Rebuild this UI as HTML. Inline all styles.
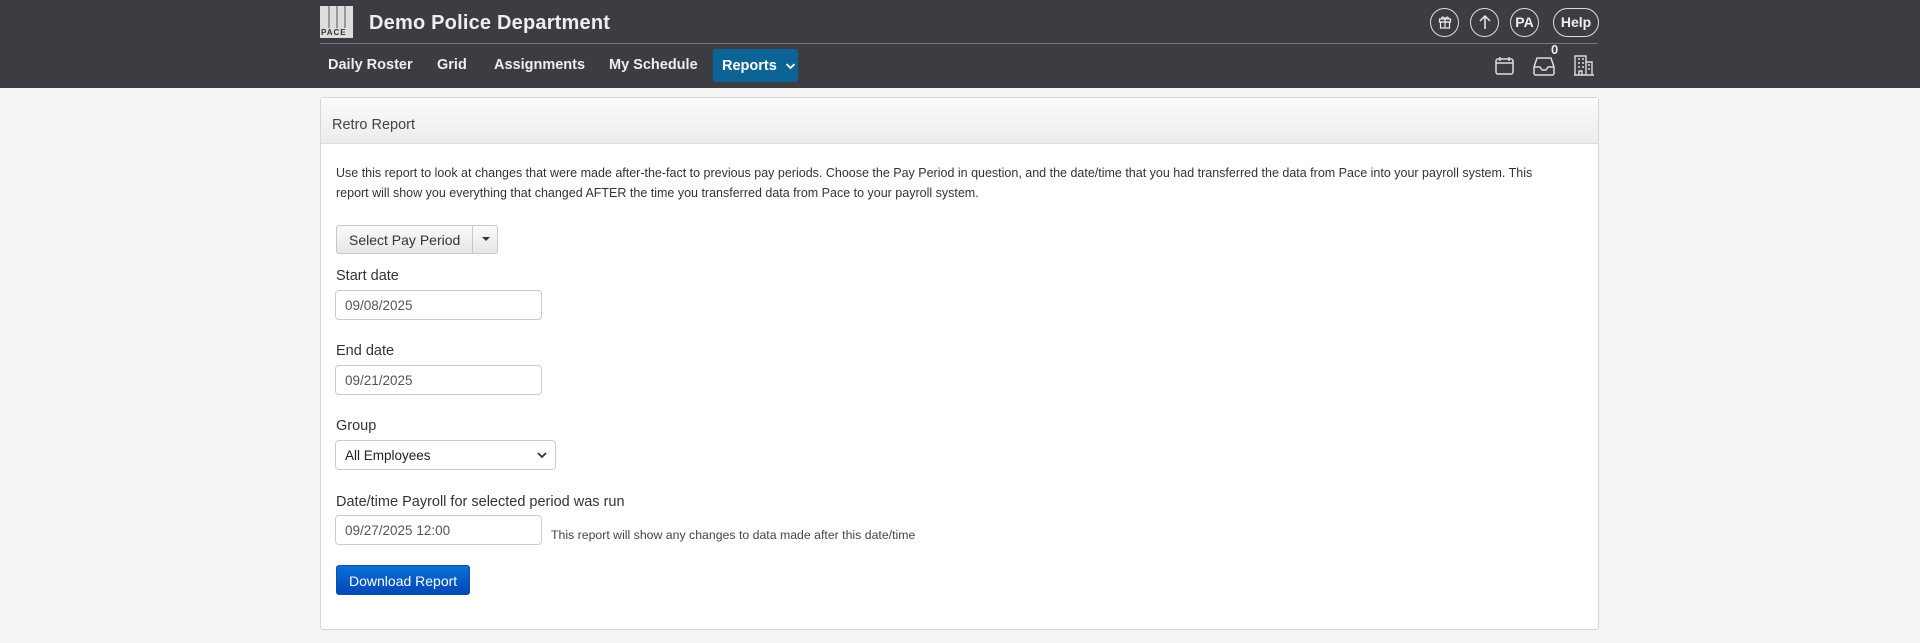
<!DOCTYPE html>
<html><head><meta charset="utf-8"><style>
*{box-sizing:border-box;margin:0;padding:0}
body{width:1920px;height:643px;overflow:hidden;background:#f4f4f4;font-family:"Liberation Sans",Arial,sans-serif;color:#333;position:relative}
.hdr{position:absolute;left:0;top:0;width:1920px;height:88px;background:#3c3d42}
.abs{position:absolute}
.logo{left:320px;top:6px;width:33px;height:32px;background:#ddd}
.logo i{position:absolute;top:0;width:2px;height:22px;background:#9a9a9a}
.logo span{position:absolute;bottom:1px;left:1px;font-size:8px;font-weight:bold;color:#333;letter-spacing:1px}
.title{left:369px;top:12px;font-size:20px;color:#eee;font-weight:bold;letter-spacing:0.2px}
.div{left:320px;top:43px;width:1278px;height:1px;background:#777}
.nav{top:57px;font-size:14.5px;font-weight:bold;color:#eee}
.rep{left:713px;top:49px;width:85px;height:33px;background:#0b6396;border-radius:3px;color:#fff;font-size:14.5px;font-weight:bold;padding:9px 0 0 9px}
.circ{top:8px;width:29px;height:29px;border:1.5px solid #ddd;border-radius:50%;color:#eee;font-weight:bold;font-size:14px;text-align:center;line-height:26px}
.panel{left:320px;top:97px;width:1279px;height:533px;background:#fff;border:1px solid #d6d6d6;border-radius:3px}
.ph{height:46px;background:linear-gradient(#fbfbfb,#ececec);border-bottom:1px solid #ddd;padding:19px 0 0 11px;font-size:14.5px;color:#444}
.desc{left:336px;top:164px;font-size:12.5px;line-height:19.5px;color:#333}
.lbl{left:336px;font-size:14.5px;color:#333}
.inp{left:335px;width:207px;height:30px;border:1px solid #ccc;border-radius:4px;font-size:13.5px;color:#555;padding:7px 0 0 9px}
.btn{left:336px;top:225px;width:162px;height:29px;border:1px solid #c8c8c8;border-radius:3px;background:linear-gradient(#fafafa,#e6e6e6);font-size:14px;color:#333}
</style></head><body>
<div class="hdr">
 <div class="abs logo"><i style="left:8px"></i><i style="left:16px"></i><i style="left:24px"></i><span>PACE</span></div>
 <div class="abs title">Demo Police Department</div>
 <div class="abs div"></div>
 <div class="abs nav" style="left:328px">Daily Roster</div>
 <div class="abs nav" style="left:437px">Grid</div>
 <div class="abs nav" style="left:494px">Assignments</div>
 <div class="abs nav" style="left:609px">My Schedule</div>
 <div class="abs rep">Reports <svg width="11" height="8" viewBox="0 0 11 8" style="margin-left:4px"><path d="M1.5 2l4 4 4-4" stroke="#fff" stroke-width="1.8" fill="none"/></svg></div>
 <div class="abs circ" style="left:1430px"><svg width="14" height="14" viewBox="0 0 14 14" style="margin-top:6px"><rect x="1.5" y="4" width="11" height="3" fill="none" stroke="#eee" stroke-width="1.2"/><rect x="2.5" y="7" width="9" height="6" fill="none" stroke="#eee" stroke-width="1.2"/><path d="M7 4v9M7 4C5 1 3 2 4 4M7 4c2-3 4-2 3 0" stroke="#eee" stroke-width="1.2" fill="none"/></svg></div>
 <div class="abs circ" style="left:1470px"><svg width="14" height="16" viewBox="0 0 14 16" style="margin-top:5px"><path d="M7 15V2M2 7l5-5 5 5" stroke="#eee" stroke-width="1.5" fill="none"/></svg></div>
 <div class="abs circ" style="left:1510px">PA</div>
 <div class="abs circ" style="left:1553px;width:46px;border-radius:15px">Help</div>
 <svg class="abs" style="left:1494px;top:55px" width="21" height="21" viewBox="0 0 21 21"><rect x="2" y="4" width="17" height="15" rx="2" fill="none" stroke="#ddd" stroke-width="1.5"/><path d="M2 8h17M6 2v4M15 2v4" stroke="#ddd" stroke-width="1.5"/></svg>
 <svg class="abs" style="left:1532px;top:56px" width="24" height="20" viewBox="0 0 24 20"><path d="M2 11L5 2h14l3 9v6a2 2 0 0 1-2 2H4a2 2 0 0 1-2-2z M2 11h6l2 3h4l2-3h6" fill="none" stroke="#ddd" stroke-width="1.5" stroke-linejoin="round"/></svg>
 <div class="abs" style="left:1551px;top:42px;color:#eee;font-weight:bold;font-size:13px">0</div>
 <svg class="abs" style="left:1573px;top:54px" width="22" height="22" viewBox="0 0 22 22"><path d="M2 21V2h11v19M13 8h6v13M1 21h20" fill="none" stroke="#ddd" stroke-width="1.4"/><path d="M5 5h2M9 5h2M5 9h2M9 9h2M5 13h2M9 13h2M15 11h2M15 15h2M6 21v-4h3v4" stroke="#ddd" stroke-width="1.4" fill="none"/></svg>
</div>
<div class="abs panel"><div class="ph">Retro Report</div></div>
<div class="abs desc">Use this report to look at changes that were made after-the-fact to previous pay periods. Choose the Pay Period in question, and the date/time that you had transferred the data from Pace into your payroll system. This<br>report will show you everything that changed AFTER the time you transferred data from Pace to your payroll system.</div>
<div class="abs btn"><span style="position:absolute;left:12px;top:6px">Select Pay Period</span><span style="position:absolute;left:135px;top:0;width:1px;height:27px;background:#c8c8c8"></span><svg style="position:absolute;left:145px;top:11px" width="8" height="5"><path d="M0 0h8L4 4z" fill="#333"/></svg></div>
<div class="abs lbl" style="top:268px">Start date</div>
<div class="abs inp" style="top:290px">09/08/2025</div>
<div class="abs lbl" style="top:343px">End date</div>
<div class="abs inp" style="top:365px">09/21/2025</div>
<div class="abs lbl" style="top:418px">Group</div>
<div class="abs inp" style="top:440px;width:221px;height:30px;color:#222;padding-top:7px">All Employees<svg style="position:absolute;right:8px;top:11px" width="10" height="7"><path d="M1 1l4 4 4-4" stroke="#333" stroke-width="1.8" fill="none"/></svg></div>
<div class="abs lbl" style="top:494px">Date/time Payroll for selected period was run</div>
<div class="abs inp" style="top:515px">09/27/2025 12:00</div>
<div class="abs" style="left:551px;top:528px;font-size:12.3px;color:#444">This report will show any changes to data made after this date/time</div>
<div class="abs" style="left:336px;top:565px;width:134px;height:30px;border-radius:3px;background:linear-gradient(#0d6fd6,#0048b8);border:1px solid #0a4fa8;color:#fff;font-size:14px;padding:7px 0 0 12px">Download Report</div>
</body></html>
